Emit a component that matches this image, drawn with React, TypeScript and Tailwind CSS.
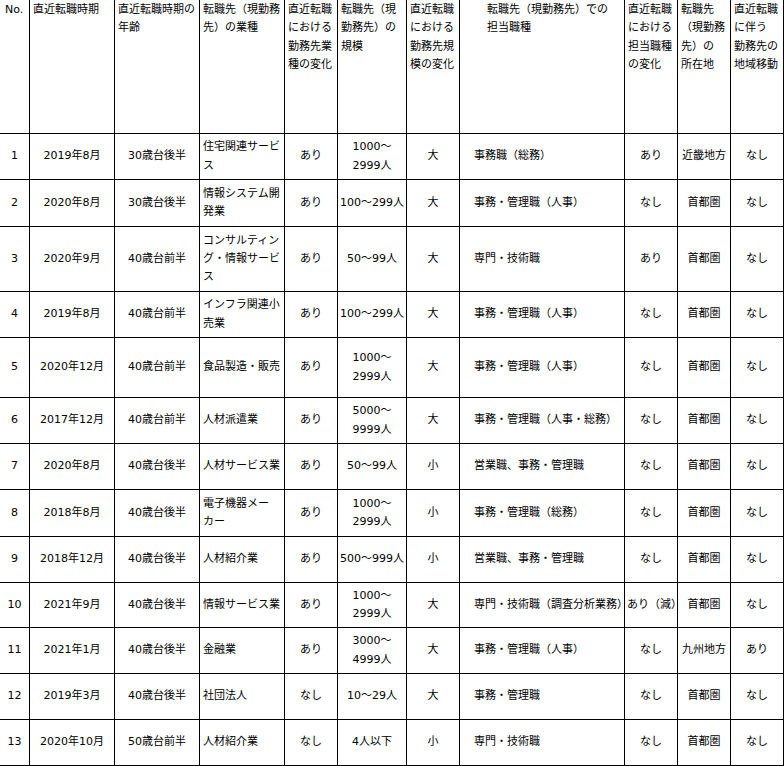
import React from "react";

type Cell = string | string[];

// header lines are broken by hand, as in the source sheet
const headers: string[][] = [
  ["No."],
  ["直近転職時期"],
  ["直近転職時期の", "年齢"],
  ["転職先（現勤務", "先）の業種"],
  ["直近転職", "における", "勤務先業", "種の変化"],
  ["転職先（現", "勤務先）の", "規模"],
  ["直近転職", "における", "勤務先規", "模の変化"],
  ["転職先（現勤務先）での", "担当職種"],
  ["直近転職", "における", "担当職種", "の変化"],
  ["転職先", "（現勤務", "先）の", "所在地"],
  ["直近転職", "に伴う", "勤務先の", "地域移動"],
];

const widths = [30, 85, 85, 85, 53, 69, 53, 165, 53, 53, 53];

const rows: { h: string; cells: Cell[] }[] = [
  { h: "h-[46px]", cells: ["1", "2019年8月", "30歳台後半", ["住宅関連サービ", "ス"], "あり", ["1000～", "2999人"], "大", "事務職（総務）", "あり", "近畿地方", "なし"] },
  { h: "h-[47px]", cells: ["2", "2020年8月", "30歳台後半", ["情報システム開", "発業"], "あり", "100～299人", "大", "事務・管理職（人事）", "なし", "首都圏", "なし"] },
  { h: "h-[65px]", cells: ["3", "2020年9月", "40歳台前半", ["コンサルティン", "グ・情報サービ", "ス"], "あり", "50～99人", "大", "専門・技術職", "あり", "首都圏", "なし"] },
  { h: "h-[46px]", cells: ["4", "2019年8月", "40歳台前半", ["インフラ関連小", "売業"], "あり", "100～299人", "大", "事務・管理職（人事）", "なし", "首都圏", "なし"] },
  { h: "h-[60px]", cells: ["5", "2020年12月", "40歳台前半", "食品製造・販売", "あり", ["1000～", "2999人"], "大", "事務・管理職（人事）", "なし", "首都圏", "なし"] },
  { h: "h-[46px]", cells: ["6", "2017年12月", "40歳台前半", "人材派遣業", "あり", ["5000～", "9999人"], "大", "事務・管理職（人事・総務）", "なし", "首都圏", "なし"] },
  { h: "h-[46px]", cells: ["7", "2020年8月", "40歳台後半", "人材サービス業", "あり", "50～99人", "小", "営業職、事務・管理職", "なし", "首都圏", "なし"] },
  { h: "h-[47px]", cells: ["8", "2018年8月", "40歳台後半", ["電子機器メー", "カー"], "あり", ["1000～", "2999人"], "小", "事務・管理職（総務）", "なし", "首都圏", "なし"] },
  { h: "h-[46px]", cells: ["9", "2018年12月", "40歳台後半", "人材紹介業", "あり", "500～999人", "小", "営業職、事務・管理職", "なし", "首都圏", "なし"] },
  { h: "h-[45px]", cells: ["10", "2021年9月", "40歳台後半", "情報サービス業", "あり", ["1000～", "2999人"], "大", "専門・技術職（調査分析業務）", "あり（減）", "首都圏", "なし"] },
  { h: "h-[46px]", cells: ["11", "2021年1月", "40歳台後半", "金融業", "あり", ["3000～", "4999人"], "大", "事務・管理職（人事）", "なし", "九州地方", "あり"] },
  { h: "h-[46px]", cells: ["12", "2019年3月", "40歳台後半", "社団法人", "なし", "10～29人", "大", "事務・管理職", "なし", "首都圏", "なし"] },
  { h: "h-[46px]", cells: ["13", "2020年10月", "50歳台前半", "人材紹介業", "なし", "4人以下", "小", "専門・技術職", "なし", "首都圏", "なし"] },
];

function Lines({ value }: { value: Cell }) {
  const list = Array.isArray(value) ? value : [value];
  return (
    <>
      {list.map((line, i) => (
        <div key={i} className="whitespace-nowrap">
          {line}
        </div>
      ))}
    </>
  );
}

const bodyAlign = (col: number) => {
  if (col === 3) return "text-left px-[3px]";
  if (col === 7) return "text-left pl-[14px] pr-0";
  return "text-center px-[2px]";
};

export default function App() {
  return (
    <div className="w-[784px] h-[766px] overflow-hidden bg-white">
      <table className="table-fixed border-collapse -ml-px -mt-px w-[785px] text-[11px] leading-[18.3px] text-black font-['DejaVu_Sans','Noto_Sans_CJK_JP',sans-serif]">
        <colgroup>
          {widths.map((w, i) => (
            <col key={i} style={{ width: w }} />
          ))}
        </colgroup>
        <thead>
          <tr className="h-[134px]">
            {headers.map((lines, i) => (
              <th
                key={i}
                className={`border border-black align-top font-normal text-left pt-[1px] pb-0 ${
                  i === 0 ? "pl-[5px] pr-0" : i === 7 ? "pl-[27px] pr-0" : "pl-[3px] pr-0"
                }`}
              >
                <Lines value={lines} />
              </th>
            ))}
          </tr>
        </thead>
        <tbody>
          {rows.map((row, r) => (
            <tr key={r} className={row.h}>
              {row.cells.map((cell, c) => (
                <td key={c} className={`border border-black align-middle py-0 ${bodyAlign(c)}`}>
                  <Lines value={cell} />
                </td>
              ))}
            </tr>
          ))}
        </tbody>
      </table>
    </div>
  );
}
